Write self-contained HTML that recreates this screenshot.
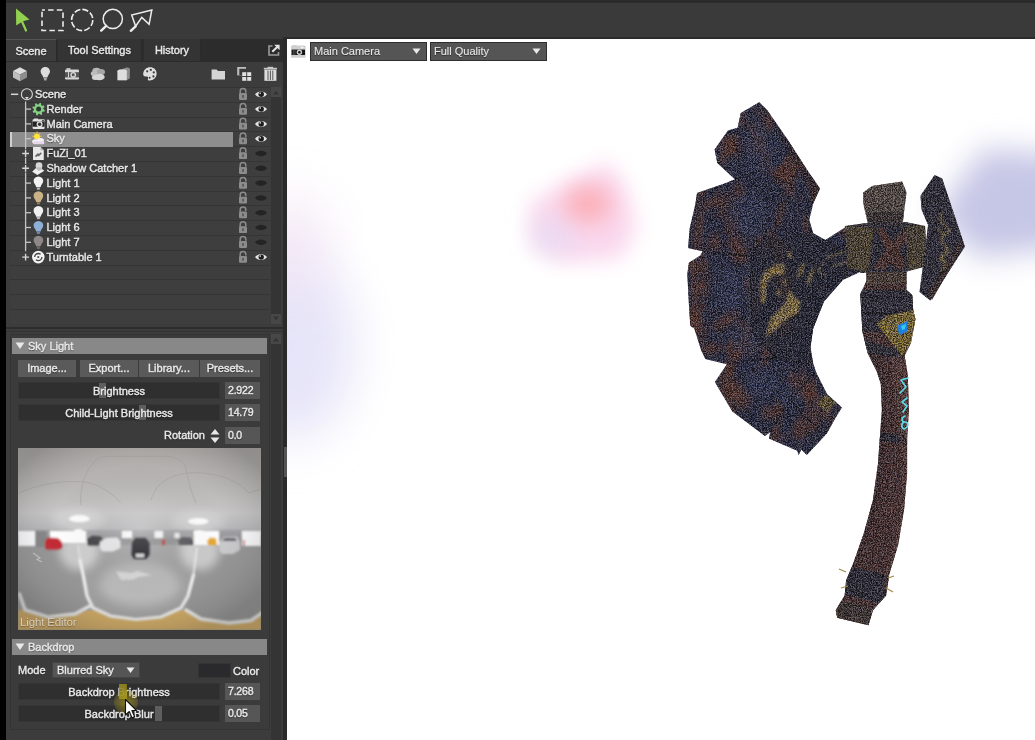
<!DOCTYPE html>
<html><head><meta charset="utf-8">
<style>
*{box-sizing:border-box;margin:0;padding:0}
html,body{width:1035px;height:740px;overflow:hidden;background:#3a3a3b}
body{position:relative;font-family:"Liberation Sans","DejaVu Sans",sans-serif;font-size:11px;-webkit-text-stroke:0.4px #e8e8e8;color:#e8e8e8;text-shadow:0 1px 1px rgba(0,0,0,.55)}
.abs{position:absolute}
#lstrip{left:0;top:0;width:6px;height:740px;background:#000}
#topline{left:6px;top:0;width:1029px;height:3px;background:#2b2b2c}
#topbar{left:6px;top:3px;width:1029px;height:37px;background:#3a3a3b}
#tabrow{left:6px;top:39px;width:279px;height:23px;background:#2c2c2d}
.tab{position:absolute;top:0;height:22px;line-height:22px;text-align:center;background:#343435;border-right:1px solid #2a2a2a}
#panel{left:6px;top:62px;width:279px;height:678px;background:#3c3c3d}
#pedge{left:283px;top:39px;width:4px;height:701px;background:#2a2a2b}
#view{left:287px;top:39px;width:748px;height:701px;background:#fff;overflow:hidden}
.row{position:absolute;left:0;width:260px;height:15px;border-bottom:1px solid #373738}
.row span{position:absolute;top:0;line-height:14px;white-space:nowrap}
.btn{position:absolute;top:360px;height:17px;background:#5a5a5b;text-align:center;line-height:17px}
.sl{position:absolute;left:18px;width:202px;height:17px;background:#2f2f30;text-align:center;line-height:17px;border:1px solid #353536}
.val{position:absolute;left:225px;width:35px;height:17px;background:#565657;line-height:17px;padding-left:3px;font-size:10.5px;letter-spacing:-0.2px}
.hd{position:absolute;left:12px;width:255px;height:16px;background:#888889;line-height:16px;padding-left:16px}
.hdl{position:absolute;width:7px;background:#5c5c5d}
.dd{position:absolute;top:42px;height:19px;background:#555556;border:1px solid #2e2e2e;line-height:17px;padding-left:3px;font-size:11px;-webkit-text-stroke:0.1px #e6e6e6}
.tl{line-height:14px;white-space:nowrap}
#wrap{position:absolute;left:0;top:0;width:1035px;height:740px;will-change:transform}
</style></head><body><div id="wrap">
<div id="lstrip" class="abs"></div>
<div id="topbar" class="abs"></div>
<div id="topline" class="abs"></div>
<div id="tabrow" class="abs">
 <div class="tab" style="left:0;width:51px;background:#3c3c3d;border-top:1px solid #555">Scene</div>
 <div class="tab" style="left:52px;width:84px">Tool Settings</div>
 <div class="tab" style="left:138px;width:57px">History</div>
</div>
<div id="panel" class="abs"></div>
<div id="pedge" class="abs"></div>
<div class="abs" style="left:283px;top:36.5px;width:752px;height:2.5px;background:#2b2b2c"></div>
<div id="view" class="abs"></div>
<!--ICONS-->
<!-- toolbar icons -->
<svg class="abs" style="left:6px;top:0" width="160" height="40" viewBox="6 0 160 40">
<path d="M16 8.5 L29.5 19.5 L22.8 21.2 L16.2 25.5Z" fill="#92d050"/>
<path d="M22 21.5 L26 30.5" stroke="#92d050" stroke-width="2.2" stroke-linecap="round"/>
<rect x="42" y="10" width="21" height="20.5" fill="none" stroke="#ececec" stroke-width="1.6" stroke-dasharray="5.5 3.2" stroke-dashoffset="2.6"/>
<circle cx="82.2" cy="20" r="10.6" fill="none" stroke="#ececec" stroke-width="1.6" stroke-dasharray="6.2 2.1"/>
<circle cx="112.8" cy="18.9" r="9.6" fill="none" stroke="#ececec" stroke-width="1.5"/>
<path d="M106.2 25.8 L101.2 30.6" stroke="#ececec" stroke-width="2.4" stroke-linecap="round"/>
<path d="M135.6 26.3 L131.7 15.1 L151.8 10 L149.1 24.3 L141.8 17.4Z" fill="none" stroke="#ececec" stroke-width="1.5" stroke-linejoin="miter"/>
<path d="M135.6 26.3 L130.8 30.8" stroke="#ececec" stroke-width="2.4" stroke-linecap="round"/>
</svg>
<!-- popout -->
<svg class="abs" style="left:268px;top:44px" width="13" height="12" viewBox="0 0 13 12"><path d="M4.5 2 H1 V11 H10.5 V8" fill="none" stroke="#9a9a9a" stroke-width="1.6"/><path d="M4.3 7.8 L10 2.2" stroke="#e4e4e4" stroke-width="2"/><path d="M6.2 0.8 H11.6 V6.2Z" fill="#e4e4e4"/></svg>
<!-- panel icon row -->
<svg class="abs" style="left:6px;top:64px" width="278" height="20" viewBox="6 64 278 20">
<g>
<path d="M13 71 L20 67.3 L27 71 L20 74.5Z" fill="#ddd"/><path d="M13 71 L20 74.5 V81.2 L13 77.5Z" fill="#bdbdbd"/><path d="M27 71 L20 74.5 V81.2 L27 77.5Z" fill="#8e8e8e"/>
<path d="M45.3 67 C48.4 67 50 69.3 50 71.6 C50 74 47.8 75.2 47.4 77.5 H43.2 C42.8 75.2 40.6 74 40.6 71.6 C40.6 69.3 42.2 67 45.3 67Z" fill="#dcdcdc"/><path d="M43.6 78 H47 L46.4 80.4 H44.2Z" fill="#a8a8a8"/>
<rect x="65" y="69.5" width="14" height="10" rx="1" fill="#d8d8d8"/><rect x="65" y="72.2" width="14" height="5.2" fill="#555"/><circle cx="73.2" cy="74.8" r="2.9" fill="#d8d8d8"/><circle cx="73.2" cy="74.8" r="1.5" fill="#555"/><rect x="66.5" y="68.2" width="4" height="1.6" fill="#d8d8d8"/><rect x="68" y="72.2" width="1" height="5.2" fill="#d8d8d8"/>
<ellipse cx="96.5" cy="70.8" rx="4.2" ry="3" fill="#b9b9b9"/><ellipse cx="101" cy="72" rx="4" ry="3" fill="#a6a6a6"/><ellipse cx="94" cy="73.6" rx="3.2" ry="2.6" fill="#bdbdbd"/><ellipse cx="99.5" cy="77" rx="5.2" ry="3.3" fill="#d6d6d6"/><ellipse cx="95.5" cy="77.6" rx="3.6" ry="2.5" fill="#d6d6d6"/>
<path d="M118.5 72.5 C117.6 70.5 119.5 69.5 121 69.5 L126.5 67.6 C129.6 67.2 130.8 69.5 129.8 71.2 V78.6 L126.5 80.2 H118.5Z" fill="#8f8f8f"/><path d="M117.4 72.8 C116.6 70.4 118.6 69.6 120.2 69.6 H124.6 C126.4 69.6 127.6 71 126.8 72.8 V80.2 H117.4Z" fill="#dedede"/>
<path d="M150 67.3 C154 67.3 156.6 70 156.6 73.6 C156.6 77.6 153.6 80.6 149.6 80.6 C148 80.6 147.4 79.6 148 78.4 C148.6 77 147.4 76.4 146 76.6 C144 76.8 143 75.6 143.2 73.6 C143.6 69.8 146.4 67.3 150 67.3Z" fill="#e0e0e0"/><circle cx="147.2" cy="71.3" r="1.1" fill="#3c3c3d"/><circle cx="150.8" cy="69.9" r="1.1" fill="#3c3c3d"/><circle cx="153.8" cy="72.4" r="1.1" fill="#3c3c3d"/><circle cx="153.4" cy="76.4" r="1.1" fill="#3c3c3d"/><circle cx="149.6" cy="77.8" r="1" fill="#3c3c3d"/>
<path d="M211.6 69.6 H216.6 L218 71 H225 V79.6 H211.6Z" fill="#d4d4d4"/>
<rect x="237.2" y="67" width="8.8" height="8.4" fill="#bdbdbd"/><rect x="239.3" y="68.8" width="6.7" height="6.6" fill="#3c3c3d"/><rect x="242.2" y="72.2" width="9" height="8.6" fill="#e2e2e2"/><path d="M246.7 72.2 V80.8 M242.2 76.5 H251.2" stroke="#3c3c3d" stroke-width="1"/>
<rect x="264.4" y="69.6" width="12" height="11.2" fill="#dcdcdc"/><path d="M268 70.6 V80 M270.4 70.6 V80 M272.8 70.6 V80" stroke="#555" stroke-width="1"/><rect x="263.8" y="67.8" width="13.2" height="1.6" fill="#c8c8c8"/><rect x="267.6" y="66.8" width="5.6" height="1.4" fill="#c8c8c8"/>
</g>
</svg>

<!--/ICONS-->
<!--TREE-->
<div class="abs" style="left:10px;top:87px;width:260px;height:237px;background:#3e3e3f;border-top:1px solid #343435;overflow:hidden" id="tree">
 <div class="abs" style="left:0;top:0;width:260px;height:237px;background:repeating-linear-gradient(#3e3e3f 0,#3e3e3f 13.8px,#353536 13.8px,#353536 14.8px)"></div>
 <div class="abs" style="left:0;top:44px;width:223px;height:14.5px;background:#8e8e8f"></div>
 <div class="abs" style="left:0;top:44px;width:2px;height:14.5px;background:#cfcfcf"></div>
 <!-- tree lines -->
 
 
</div>
<div class="abs" style="left:271px;top:87px;width:10px;height:237px;background:#343435"></div>
<div class="abs" style="left:271px;top:87px;width:10px;height:10px;background:#474748"></div>
<div class="abs" style="left:271px;top:314px;width:10px;height:10px;background:#474748"></div>
<svg class="abs" style="left:271px;top:87px" width="10" height="237"><path d="M2 7.5L5 3.5L8 7.5Z M2 229.5L5 233.5L8 229.5Z" fill="#343435"/></svg>
<svg class="abs" style="left:6px;top:84px" width="278" height="240" viewBox="6 84 278 240">
<path d="M25.6 101.5 V251.3" stroke="#c4c4c4" stroke-width="1.3"/>
<path d="M25.6 109.1 H31" stroke="#c4c4c4" stroke-width="1.3"/>
<path d="M25.6 123.9 H31" stroke="#c4c4c4" stroke-width="1.3"/>
<path d="M25.6 138.7 H31" stroke="#c4c4c4" stroke-width="1.3"/>
<path d="M25.6 183.1 H31" stroke="#c4c4c4" stroke-width="1.3"/>
<path d="M25.6 197.9 H31" stroke="#c4c4c4" stroke-width="1.3"/>
<path d="M25.6 212.7 H31" stroke="#c4c4c4" stroke-width="1.3"/>
<path d="M25.6 227.5 H31" stroke="#c4c4c4" stroke-width="1.3"/>
<path d="M25.6 242.3 H31" stroke="#c4c4c4" stroke-width="1.3"/>
<path d="M11 94.3 H18.2" stroke="#d6d6d6" stroke-width="1.5"/>
<rect x="21" y="149.3" width="9" height="8.4" fill="#3e3e3f"/>
<path d="M22.2 153.5 H29 M25.6 150.1 V156.9" stroke="#d6d6d6" stroke-width="1.4"/>
<rect x="21" y="164.1" width="9" height="8.4" fill="#3e3e3f"/>
<path d="M22.2 168.3 H29 M25.6 164.9 V171.7" stroke="#d6d6d6" stroke-width="1.4"/>
<rect x="21" y="252.9" width="9" height="8.4" fill="#3e3e3f"/>
<path d="M22.2 257.1 H29 M25.6 253.7 V260.5" stroke="#d6d6d6" stroke-width="1.4"/>
<circle cx="26.9" cy="94.3" r="5.5" fill="none" stroke="#d8d8d8" stroke-width="1.1"/><path d="M25 96.9 H28.8 L26.9 99.3Z" fill="#e8e8e8"/>
<path d="M44.88 110.35 L44.51 111.55 L42.51 111.71 L41.92 112.42 L42.16 114.42 L41.05 115.01 L39.52 113.71 L38.60 113.80 L37.35 115.38 L36.15 115.01 L35.99 113.01 L35.28 112.42 L33.28 112.66 L32.69 111.55 L33.99 110.02 L33.90 109.10 L32.32 107.85 L32.69 106.65 L34.69 106.49 L35.28 105.78 L35.04 103.78 L36.15 103.19 L37.68 104.49 L38.60 104.40 L39.85 102.82 L41.05 103.19 L41.21 105.19 L41.92 105.78 L43.92 105.54 L44.51 106.65 L43.21 108.18 L43.30 109.10Z" fill="#86d086"/><circle cx="38.6" cy="109.1" r="2.5" fill="#2f3a2f"/>
<rect x="32.6" y="119.3" width="12" height="9.6" rx=".8" fill="#e2e2e2"/><rect x="32.6" y="121.5" width="12" height="5.2" fill="#222"/><circle cx="39.6" cy="124.2" r="3" fill="#e2e2e2"/><circle cx="39.6" cy="124.2" r="1.7" fill="#333"/><rect x="34" y="118.5" width="4" height="1.4" fill="#e2e2e2"/><rect x="42" y="119.9" width="2" height="1.4" fill="#555"/>
<g stroke="#f6d23a" stroke-width="1"><path d="M37 131.5 V132.9 M32.4 136.3 H33.8 M33.6 132.9 L34.6 133.9 M40.4 132.9 L39.4 133.9 M41.6 136.3 H40.2"/></g><circle cx="37" cy="136.5" r="3" fill="#ffe23a"/>
<ellipse cx="40.6" cy="140.7" rx="3.4" ry="2.8" fill="#f4f0f6"/><ellipse cx="36" cy="141.7" rx="3.8" ry="2.4" fill="#f4f0f6"/><rect x="33" y="141.3" width="11.4" height="3" rx="1.5" fill="#e6d6ea"/>
<path d="M33 147.1 H40.6 L43.8 150.3 V160.1 H33Z" fill="#e8e8e8"/><path d="M40.6 147.1 V150.3 H43.8Z" fill="#aaa"/><path d="M36 156.1 L38 154.1 M38.6 155.5 L40.8 153.3" stroke="#666" stroke-width="1.7" stroke-linecap="round"/>
<circle cx="39" cy="165.7" r="3.4" fill="#d8d8d8"/><path d="M32.2 171.7 L36 167.9 L41.8 168.9 L44.4 170.7 L37.4 174.9Z" fill="#f0f0f0"/><path d="M35.6 168.5 C36.6 166.7 41.6 166.7 42.4 169.1 L39 171.1Z" fill="#bdbdbd"/>
<path d="M38.4 176.5 C41.6 176.5 43.2 178.7 43.2 181.1 C43.2 183.7 40.9 184.7 40.6 187.1 H36.2 C35.9 184.7 33.6 183.7 33.6 181.1 C33.6 178.7 35.2 176.5 38.4 176.5Z" fill="#f2f2f2"/><path d="M36.5 187.4 H40.3 L39.6 189.7 H37.2Z" fill="#b8b8b8"/>
<path d="M38.4 191.3 C41.6 191.3 43.2 193.5 43.2 195.9 C43.2 198.5 40.9 199.5 40.6 201.9 H36.2 C35.9 199.5 33.6 198.5 33.6 195.9 C33.6 193.5 35.2 191.3 38.4 191.3Z" fill="#c9b285"/><path d="M36.5 202.2 H40.3 L39.6 204.5 H37.2Z" fill="#8f7d5a"/>
<path d="M38.4 206.1 C41.6 206.1 43.2 208.3 43.2 210.7 C43.2 213.3 40.9 214.3 40.6 216.7 H36.2 C35.9 214.3 33.6 213.3 33.6 210.7 C33.6 208.3 35.2 206.1 38.4 206.1Z" fill="#f0f0f0"/><path d="M36.5 217.0 H40.3 L39.6 219.3 H37.2Z" fill="#b8b8b8"/>
<path d="M38.4 220.9 C41.6 220.9 43.2 223.1 43.2 225.5 C43.2 228.1 40.9 229.1 40.6 231.5 H36.2 C35.9 229.1 33.6 228.1 33.6 225.5 C33.6 223.1 35.2 220.9 38.4 220.9Z" fill="#8fb0d6"/><path d="M36.5 231.8 H40.3 L39.6 234.1 H37.2Z" fill="#6a88ac"/>
<path d="M38.4 235.7 C41.6 235.7 43.2 237.9 43.2 240.3 C43.2 242.9 40.9 243.9 40.6 246.3 H36.2 C35.9 243.9 33.6 242.9 33.6 240.3 C33.6 237.9 35.2 235.7 38.4 235.7Z" fill="#8e8888"/><path d="M36.5 246.6 H40.3 L39.6 248.9 H37.2Z" fill="#6c6868"/>
<circle cx="38.3" cy="257.1" r="6.3" fill="#f4f4f4"/><circle cx="38.3" cy="257.1" r="3.6" fill="none" stroke="#444" stroke-width="1.3" stroke-dasharray="8 3"/><circle cx="38.3" cy="257.1" r="1.1" fill="#555"/>
<path d="M240.2 93.7 V91.3 C240.2 87.7 245.8 87.7 245.8 91.3 V92.7" fill="none" stroke="#8c8c8c" stroke-width="1.5"/><rect x="239" y="93.1" width="8" height="6.8" rx="1.2" fill="#8c8c8c"/><rect x="242.3" y="95.1" width="1.4" height="2.8" fill="#4a4a4a"/>
<path d="M255 94.3 C257.4 90.4 264.6 90.4 267 94.3 C264.6 98.2 257.4 98.2 255 94.3Z" fill="#e6e6e6"/><circle cx="261.2" cy="94.3" r="2.7" fill="#1c1c1c"/><circle cx="260.2" cy="93.3" r=".8" fill="#eee"/>
<path d="M240.2 108.5 V106.1 C240.2 102.5 245.8 102.5 245.8 106.1 V107.5" fill="none" stroke="#8c8c8c" stroke-width="1.5"/><rect x="239" y="107.9" width="8" height="6.8" rx="1.2" fill="#8c8c8c"/><rect x="242.3" y="109.9" width="1.4" height="2.8" fill="#4a4a4a"/>
<path d="M255 109.1 C257.4 105.2 264.6 105.2 267 109.1 C264.6 113.0 257.4 113.0 255 109.1Z" fill="#e6e6e6"/><circle cx="261.2" cy="109.1" r="2.7" fill="#1c1c1c"/><circle cx="260.2" cy="108.1" r=".8" fill="#eee"/>
<path d="M240.2 123.3 V120.9 C240.2 117.3 245.8 117.3 245.8 120.9 V122.3" fill="none" stroke="#8c8c8c" stroke-width="1.5"/><rect x="239" y="122.7" width="8" height="6.8" rx="1.2" fill="#8c8c8c"/><rect x="242.3" y="124.7" width="1.4" height="2.8" fill="#4a4a4a"/>
<path d="M255 123.9 C257.4 120.0 264.6 120.0 267 123.9 C264.6 127.8 257.4 127.8 255 123.9Z" fill="#e6e6e6"/><circle cx="261.2" cy="123.9" r="2.7" fill="#1c1c1c"/><circle cx="260.2" cy="122.9" r=".8" fill="#eee"/>
<path d="M240.2 138.1 V135.7 C240.2 132.1 245.8 132.1 245.8 135.7 V137.1" fill="none" stroke="#8c8c8c" stroke-width="1.5"/><rect x="239" y="137.5" width="8" height="6.8" rx="1.2" fill="#8c8c8c"/><rect x="242.3" y="139.5" width="1.4" height="2.8" fill="#4a4a4a"/>
<path d="M255 138.7 C257.4 134.8 264.6 134.8 267 138.7 C264.6 142.6 257.4 142.6 255 138.7Z" fill="#e6e6e6"/><circle cx="261.2" cy="138.7" r="2.7" fill="#1c1c1c"/><circle cx="260.2" cy="137.7" r=".8" fill="#eee"/>
<path d="M240.2 152.9 V150.5 C240.2 146.9 245.8 146.9 245.8 150.5 V151.9" fill="none" stroke="#8c8c8c" stroke-width="1.5"/><rect x="239" y="152.3" width="8" height="6.8" rx="1.2" fill="#8c8c8c"/><rect x="242.3" y="154.3" width="1.4" height="2.8" fill="#4a4a4a"/>
<path d="M255 153.5 C257.4 149.8 264.6 149.8 267 153.5 C264.6 157.2 257.4 157.2 255 153.5Z" fill="#242425"/>
<path d="M240.2 167.7 V165.3 C240.2 161.7 245.8 161.7 245.8 165.3 V166.7" fill="none" stroke="#8c8c8c" stroke-width="1.5"/><rect x="239" y="167.1" width="8" height="6.8" rx="1.2" fill="#8c8c8c"/><rect x="242.3" y="169.1" width="1.4" height="2.8" fill="#4a4a4a"/>
<path d="M255 168.3 C257.4 164.6 264.6 164.6 267 168.3 C264.6 172.0 257.4 172.0 255 168.3Z" fill="#242425"/>
<path d="M240.2 182.5 V180.1 C240.2 176.5 245.8 176.5 245.8 180.1 V181.5" fill="none" stroke="#8c8c8c" stroke-width="1.5"/><rect x="239" y="181.9" width="8" height="6.8" rx="1.2" fill="#8c8c8c"/><rect x="242.3" y="183.9" width="1.4" height="2.8" fill="#4a4a4a"/>
<path d="M255 183.1 C257.4 179.4 264.6 179.4 267 183.1 C264.6 186.8 257.4 186.8 255 183.1Z" fill="#242425"/>
<path d="M240.2 197.3 V194.9 C240.2 191.3 245.8 191.3 245.8 194.9 V196.3" fill="none" stroke="#8c8c8c" stroke-width="1.5"/><rect x="239" y="196.7" width="8" height="6.8" rx="1.2" fill="#8c8c8c"/><rect x="242.3" y="198.7" width="1.4" height="2.8" fill="#4a4a4a"/>
<path d="M255 197.9 C257.4 194.2 264.6 194.2 267 197.9 C264.6 201.6 257.4 201.6 255 197.9Z" fill="#242425"/>
<path d="M240.2 212.1 V209.7 C240.2 206.1 245.8 206.1 245.8 209.7 V211.1" fill="none" stroke="#8c8c8c" stroke-width="1.5"/><rect x="239" y="211.5" width="8" height="6.8" rx="1.2" fill="#8c8c8c"/><rect x="242.3" y="213.5" width="1.4" height="2.8" fill="#4a4a4a"/>
<path d="M255 212.7 C257.4 209.0 264.6 209.0 267 212.7 C264.6 216.4 257.4 216.4 255 212.7Z" fill="#242425"/>
<path d="M240.2 226.9 V224.5 C240.2 220.9 245.8 220.9 245.8 224.5 V225.9" fill="none" stroke="#8c8c8c" stroke-width="1.5"/><rect x="239" y="226.3" width="8" height="6.8" rx="1.2" fill="#8c8c8c"/><rect x="242.3" y="228.3" width="1.4" height="2.8" fill="#4a4a4a"/>
<path d="M255 227.5 C257.4 223.8 264.6 223.8 267 227.5 C264.6 231.2 257.4 231.2 255 227.5Z" fill="#242425"/>
<path d="M240.2 241.7 V239.3 C240.2 235.7 245.8 235.7 245.8 239.3 V240.7" fill="none" stroke="#8c8c8c" stroke-width="1.5"/><rect x="239" y="241.1" width="8" height="6.8" rx="1.2" fill="#8c8c8c"/><rect x="242.3" y="243.1" width="1.4" height="2.8" fill="#4a4a4a"/>
<path d="M255 242.3 C257.4 238.6 264.6 238.6 267 242.3 C264.6 246.0 257.4 246.0 255 242.3Z" fill="#242425"/>
<path d="M240.2 256.5 V254.1 C240.2 250.5 245.8 250.5 245.8 254.1 V255.5" fill="none" stroke="#8c8c8c" stroke-width="1.5"/><rect x="239" y="255.9" width="8" height="6.8" rx="1.2" fill="#8c8c8c"/><rect x="242.3" y="257.9" width="1.4" height="2.8" fill="#4a4a4a"/>
<path d="M255 257.1 C257.4 253.2 264.6 253.2 267 257.1 C264.6 261.0 257.4 261.0 255 257.1Z" fill="#e6e6e6"/><circle cx="261.2" cy="257.1" r="2.7" fill="#1c1c1c"/><circle cx="260.2" cy="256.1" r=".8" fill="#eee"/>
</svg>
<span class="abs tl" style="left:35px;top:87.0px">Scene</span>
<span class="abs tl" style="left:46.5px;top:101.8px">Render</span>
<span class="abs tl" style="left:46.5px;top:116.6px">Main Camera</span>
<span class="abs tl" style="left:46.5px;top:131.4px">Sky</span>
<span class="abs tl" style="left:46.5px;top:146.2px">FuZi_01</span>
<span class="abs tl" style="left:46.5px;top:161.0px">Shadow Catcher 1</span>
<span class="abs tl" style="left:46.5px;top:175.8px">Light 1</span>
<span class="abs tl" style="left:46.5px;top:190.6px">Light 2</span>
<span class="abs tl" style="left:46.5px;top:205.4px">Light 3</span>
<span class="abs tl" style="left:46.5px;top:220.2px">Light 6</span>
<span class="abs tl" style="left:46.5px;top:235.0px">Light 7</span>
<span class="abs tl" style="left:46.5px;top:249.8px">Turntable 1</span>
<!--/TREE-->
<!--PROPS-->
<!-- divider -->
<div class="abs" style="left:6px;top:327px;width:277px;height:2px;background:#2d2d2e"></div>
<div class="abs" style="left:6px;top:331px;width:277px;height:1px;background:#333334"></div>
<div class="abs" style="left:10px;top:334px;width:260px;height:396px;background:#3b3b3c;border:1px solid #343435"></div>
<div class="abs" style="left:6px;top:730px;width:265px;height:10px;background:#3c3c3d"></div>
<!-- prop scrollbar -->
<div class="abs" style="left:271px;top:334px;width:10px;height:406px;background:#343435"></div>
<div class="abs" style="left:271px;top:334px;width:10px;height:10px;background:#474748"></div>
<svg class="abs" style="left:271px;top:334px" width="10" height="10"><path d="M2 7.5L5 3.5L8 7.5Z" fill="#343435"/></svg>
<div class="abs" style="left:284px;top:447px;width:3px;height:30px;background:#555556"></div>

<div class="hd" style="top:338px">Sky Light</div>
<svg class="abs" style="left:15px;top:342px" width="10" height="8"><path d="M0.5 0.5H9.5L5 7Z" fill="#e8e8e8"/></svg>
<div class="btn" style="left:18px;width:58px">Image...</div>
<div class="btn" style="left:80px;width:58px">Export...</div>
<div class="btn" style="left:139px;width:60px">Library...</div>
<div class="btn" style="left:200px;width:60px">Presets...</div>

<div class="sl" style="top:382px"><i style="position:absolute;left:80px;top:0;width:7px;height:15px;background:#5e5e5f"></i><span style="position:relative">Brightness</span></div>
<div class="val" style="top:382px">2.922</div>
<div class="sl" style="top:404px"><i style="position:absolute;left:119.5px;top:0;width:7px;height:15px;background:#5e5e5f"></i><span style="position:relative">Child-Light Brightness</span></div>
<div class="val" style="top:404px">14.79</div>
<span class="abs" style="left:140px;width:65px;text-align:right;top:427px;line-height:17px">Rotation</span>
<svg class="abs" style="left:209px;top:428px" width="12" height="16"><path d="M1.5 6.5L6 1L10.5 6.5Z M1.5 9.5L6 15L10.5 9.5Z" fill="#e8e8e8"/></svg>
<div class="val" style="top:427px">0.0</div>
<!--PANO-->
<svg class="abs" style="left:18px;top:448px" width="243" height="182" viewBox="18 448 243 182">
<defs>
<linearGradient id="pg1" x1="0" y1="0" x2="0" y2="1"><stop offset="0" stop-color="#adaaa7"/><stop offset=".2" stop-color="#b9b7b5"/><stop offset=".36" stop-color="#c6c5c5"/><stop offset=".46" stop-color="#b2b2b5"/><stop offset=".5" stop-color="#8a8a8c"/><stop offset=".56" stop-color="#969697"/><stop offset=".75" stop-color="#9c9c9c"/><stop offset=".9" stop-color="#989898"/><stop offset="1" stop-color="#949494"/></linearGradient>
<radialGradient id="pg2" cx=".5" cy=".45" r=".6"><stop offset="0" stop-color="#fff" stop-opacity=".25"/><stop offset=".6" stop-color="#888" stop-opacity="0"/><stop offset="1" stop-color="#444" stop-opacity=".28"/></radialGradient>
<filter id="pb1" x="-20%" y="-20%" width="140%" height="140%"><feGaussianBlur stdDeviation="0.9"/></filter>
<filter id="pb2" x="-30%" y="-30%" width="160%" height="160%"><feGaussianBlur stdDeviation="2.5"/></filter>
<filter id="pb3" x="-30%" y="-30%" width="160%" height="160%"><feGaussianBlur stdDeviation="5"/></filter>
<clipPath id="pcl"><rect x="18" y="448" width="243" height="182"/></clipPath>
</defs>
<g clip-path="url(#pcl)">
<rect x="18" y="448" width="243" height="182" fill="url(#pg1)"/>
<!-- yellow band -->
<rect x="18" y="610" width="243" height="20" fill="#d2aa60" filter="url(#pb1)"/>
<!-- floor U areas -->
<g filter="url(#pb1)">
<path d="M18 545 H78 L83 573 L87 596 L93 608 L75 614 L48 617 L25 611 L18 594Z" fill="#969696"/>
<path d="M79 545 H197 L193 576 L188 596 L181 608 L161 617 L136 619.5 L110 616 L93 608 L87 596 L83 573Z" fill="#a0a0a1"/>
<path d="M197 545 H261 V614 L251 620.5 L229 623 L201 619 L186 610 L190 596 L193.5 576Z" fill="#959595"/>
</g>
<!-- light glow on floor/horizon -->
<ellipse cx="79" cy="550" rx="20" ry="20" fill="#fff" opacity=".5" filter="url(#pb3)"/>
<ellipse cx="200" cy="550" rx="20" ry="20" fill="#fff" opacity=".5" filter="url(#pb3)"/>
<ellipse cx="140" cy="585" rx="40" ry="22" fill="#d0d0d0" opacity=".5" filter="url(#pb3)"/>
<!-- ceiling glow -->
<ellipse cx="79" cy="520" rx="26" ry="11" fill="#fff" opacity=".3" filter="url(#pb3)"/>
<ellipse cx="198" cy="522" rx="26" ry="11" fill="#fff" opacity=".3" filter="url(#pb3)"/>
<!-- horizon band: windows -->
<g filter="url(#pb1)">
<rect x="18" y="530" width="243" height="9" fill="#97979a" opacity=".7"/>
<rect x="18" y="531" width="17" height="15" fill="#fdfdff"/>
<rect x="35" y="531" width="11.5" height="16" fill="#858585"/>
<rect x="50" y="531" width="36" height="12" fill="#fff"/>
<rect x="122" y="531" width="10" height="7" fill="#fafafa"/>
<rect x="154.5" y="531" width="8.5" height="7" fill="#f4f4f4"/>
<rect x="174.5" y="533" width="5" height="5" fill="#eee"/>
<rect x="194" y="531" width="25" height="14" fill="#fff"/>
<rect x="242" y="531" width="19" height="15" fill="#fdfdff"/>
<!-- cars -->
<path d="M45 541 L48 537.5 L58 538 L62 542 V548 L58 549.5 H47 L45 548Z" fill="#c22a35"/>
<path d="M87 539 L92 535.5 L101 536 L103 540 V544 L98 545.5 H88Z" fill="#3c3c40"/>
<path d="M100 542 L106 538 L117 537.5 L120.5 541 V548 L113 551.5 H103 L100 549Z" fill="#e6e6e8"/>
<path d="M132 543 L135 537.5 L146 537.5 L149.5 543 V555 L146 559 H134 L131.5 555Z" fill="#1c1c20"/>
<rect x="136" y="554" width="8" height="3" fill="#ddd"/>
<rect x="162" y="539" width="3" height="6" fill="#b8413a"/>
<path d="M178 540 L182 537 L191 537.5 L193.5 541 V545 H179Z" fill="#55555a"/>
<path d="M207 541 L210 537.5 L216 538 L217 545 H208Z" fill="#e8a82c"/>
<path d="M219 542 L224 537 L237 536.5 L240 541 V550 L233 554 H222 L219 550Z" fill="#c9c9cc"/>
<path d="M222 541 L225 538 L235 538 L237 541Z" fill="#5a5a60"/>
<rect x="243.5" y="540" width="1.5" height="6" fill="#c44"/>
</g>
<!-- ceiling lights -->
<ellipse cx="79.5" cy="518.7" rx="10.5" ry="3.6" fill="#fff" filter="url(#pb1)"/>
<ellipse cx="78.5" cy="531.5" rx="4.5" ry="2.6" fill="#fff" filter="url(#pb1)"/>
<ellipse cx="198.3" cy="521.3" rx="10.3" ry="3.4" fill="#fff" filter="url(#pb1)"/>
<ellipse cx="199" cy="533" rx="4.5" ry="2.4" fill="#fff" filter="url(#pb1)"/>
<!-- ceiling seams -->
<g fill="none" stroke="#9f9c99" stroke-width=".6" opacity=".85">
<path d="M81 505 C80 490 82 478 93 463 C98 457 104 456.3 110.5 456.3 L166 456.3 C178 457 184 462 186 468 C188 478 190 490 196 503"/>
<path d="M151 500 C154 490 160 483 166 480 C176 474 186 472.7 196 472.7 C208 473 218 475 226 478 C236 482 244 487 249 493"/>
<path d="M18.8 493 C28 489 36 486.5 43 485 C52 483 62 481.5 70 481.5 L83 481.5 C92 483 100 486 105.5 490 C112 494 117 498 120.5 503"/>
<path d="M249 493 C254 491 258 490 261 489.5"/>
</g>
<!-- white lines -->
<g fill="none" stroke="#f1f1f1" stroke-linecap="round" filter="url(#pb1)">
<path d="M77.8 545 L80 560" stroke-width="1"/>
<path d="M80 560 L83 574 L87 596 L93 608 L110.5 616 L136 619.5 L161 617 L181 608 L188 596 L193.5 575" stroke-width="3.2"/>
<path d="M193.5 575 L197 548" stroke-width="1.6"/>
<path d="M19.5 594 L25 610 L48 617 L75 614 L90 606" stroke-width="3.4"/>
<path d="M186 610 L201 619 L229 623 L251 620.5 L262 613" stroke-width="3.4"/>
</g>
<!-- arrow -->
<path d="M116 571.5 L132 573 L137 571 L152 575 L139 577 L133 579.5 L121 580Z" fill="#dcdcdc" opacity=".85" filter="url(#pb1)"/>
<path d="M33 553 L40 558 L37 559.5 L42 562" stroke="#d5d5d5" stroke-width="1.2" fill="none" opacity=".7"/>
<rect x="18" y="448" width="243" height="182" fill="url(#pg2)"/>
<text x="20" y="626" font-family="Liberation Sans, sans-serif" font-size="11.5" fill="#f2f2f2" opacity=".6" letter-spacing="-.15">Light Editor</text>
</g>
</svg>

<!--/PANO-->
<div class="hd" style="top:639px">Backdrop</div>
<svg class="abs" style="left:15px;top:643px" width="10" height="8"><path d="M0.5 0.5H9.5L5 7Z" fill="#e8e8e8"/></svg>
<span class="abs" style="left:18px;top:662px;line-height:16px">Mode</span>
<div class="abs" style="left:52px;top:662px;width:88px;height:16px;background:#555556;border:1px solid #444;line-height:14px;padding-left:4px">Blurred Sky</div>
<svg class="abs" style="left:126px;top:667px" width="9" height="7"><path d="M0.5 0.5H8.5L4.5 6Z" fill="#e8e8e8"/></svg>
<div class="abs" style="left:198px;top:663px;width:33px;height:15px;background:#2a2a2c;border:1px solid #343435"></div>
<span class="abs" style="left:233px;top:663px;line-height:16px">Color</span>
<div class="sl" style="top:683px"><i style="position:absolute;left:100px;top:0;width:7px;height:15px;background:#8a7f1e"></i><span style="position:relative">Backdrop Brightness</span></div>
<div class="val" style="top:683px">7.268</div>
<div class="sl" style="top:705px"><i style="position:absolute;left:136px;top:0;width:7px;height:15px;background:#5e5e5f"></i><span style="position:relative">Backdrop Blur</span></div>
<div class="val" style="top:705px">0.05</div>
<!-- cursor highlight + handle -->
<div class="abs" style="left:119px;top:684px;width:8px;height:15px;background:#8a7f1e;opacity:.85"></div>
<div class="abs" style="left:114px;top:690px;width:24px;height:24px;border-radius:12px;background:radial-gradient(rgba(190,170,20,.55),rgba(190,170,20,.25) 60%,rgba(190,170,20,0) 100%)"></div>
<svg class="abs" style="left:124px;top:698px" width="14" height="22"><path d="M1.5 1.5V17L5.3 13.5L8 19.8L10.6 18.7L7.9 12.5H12.5Z" fill="#fff" stroke="#111" stroke-width="1.1" stroke-linejoin="round"/></svg>

<!--/PROPS-->
<!--AXE-->
<svg class="abs" style="left:287px;top:39px" width="748" height="701" viewBox="287 39 748 701">
<defs>
<filter id="bb1" x="-50%" y="-50%" width="200%" height="200%"><feGaussianBlur stdDeviation="11"/></filter>
<filter id="bb4" x="-50%" y="-50%" width="200%" height="200%"><feGaussianBlur stdDeviation="15"/></filter>
<filter id="bb2" x="-50%" y="-50%" width="200%" height="200%"><feGaussianBlur stdDeviation="24"/></filter>
<filter id="bb3" x="-50%" y="-50%" width="200%" height="200%"><feGaussianBlur stdDeviation="8"/></filter>
<filter id="ab" x="-10%" y="-10%" width="120%" height="120%"><feGaussianBlur stdDeviation="3.5"/></filter>
<filter id="ab2" x="-10%" y="-10%" width="120%" height="120%"><feGaussianBlur stdDeviation="1.2"/></filter>
<filter id="rustn" color-interpolation-filters="sRGB" x="0" y="0" width="100%" height="100%"><feTurbulence type="fractalNoise" baseFrequency="0.035 0.022" numOctaves="3" seed="7" result="n"/><feColorMatrix in="n" type="matrix" values="0 0 0 0 .44  0 0 0 0 .24  0 0 0 0 .16  4.5 0 0 0 -2.3"/><feComposite in2="SourceGraphic" operator="in"/></filter>
<filter id="grain" color-interpolation-filters="sRGB" x="0" y="0" width="100%" height="100%"><feTurbulence type="fractalNoise" baseFrequency="0.9" numOctaves="2" seed="3" result="n"/><feColorMatrix in="n" type="matrix" values="0 0 0 0 0  0 0 0 0 0  0 0 0 0 0  2.2 2.2 2.2 0 -2.7"/><feComposite in2="SourceGraphic" operator="in"/></filter>
<filter id="grain2" color-interpolation-filters="sRGB" x="0" y="0" width="100%" height="100%"><feTurbulence type="fractalNoise" baseFrequency="0.8" numOctaves="2" seed="11" result="n"/><feColorMatrix in="n" type="matrix" values="0 0 0 0 .85  0 0 0 0 .82  0 0 0 0 .95  2.2 2.2 2.2 0 -3.0"/><feComposite in2="SourceGraphic" operator="in"/></filter>
</defs>
<g>
<ellipse cx="292" cy="345" rx="62" ry="95" fill="#e6e4f8" filter="url(#bb2)"/>
<ellipse cx="292" cy="245" rx="36" ry="50" fill="#f3e4f4" filter="url(#bb2)" opacity=".8"/>
<path d="M607 162 L530 203 L532 244 L563 262 L622 258 L636 227 L624 184Z" fill="#f9d6ec" filter="url(#bb1)"/>
<ellipse cx="553" cy="236" rx="24" ry="20" fill="#e6dcf4" filter="url(#bb1)" opacity=".65"/>
<ellipse cx="588" cy="204" rx="24" ry="19" fill="#fcaab0" filter="url(#bb1)" opacity=".85"/>
<path d="M984 148 L1090 158 L1090 244 L978 258 L936 214Z" fill="#c6c6e6" filter="url(#bb4)"/>
</g>
<clipPath id="cb"><path d="M759.2 102.2 L767.3 110.3 L788.9 141.4 L807.8 171.0 L820.0 188.6 L813.2 203.5 L809.2 219.7 L813.2 233.2 L825.4 240.0 L845.0 227.5 L860.0 250.0 L859.0 272.4 L843.0 279.7 L824.0 301.4 L813.2 328.4 L810.5 347.3 L813.2 363.5 L816.2 372.4 L827.0 394.0 L841.9 407.6 L835.1 418.4 L827.0 433.2 L806.8 454.9 L801.4 449.5 L798.6 454.9 L797.3 450.8 L768.9 438.6 L770.3 431.9 L764.9 436.0 L732.4 411.6 L714.9 381.9 L727.0 364.3 L705.4 359.0 L701.4 350.8 L694.3 328.4 L690.3 325.7 L688.9 304.0 L687.3 274.0 L688.9 262.7 L700.3 255.4 L702.7 251.3 L688.1 248.1 L689.7 228.6 L695.4 204.3 L697.0 193.0 L725.4 183.2 L734.9 179.2 L717.3 163.0 L714.6 149.5 L728.0 130.5 L737.6 127.8 L740.8 113.0Z"/></clipPath>
<path d="M759.2 102.2 L767.3 110.3 L788.9 141.4 L807.8 171.0 L820.0 188.6 L813.2 203.5 L809.2 219.7 L813.2 233.2 L825.4 240.0 L845.0 227.5 L860.0 250.0 L859.0 272.4 L843.0 279.7 L824.0 301.4 L813.2 328.4 L810.5 347.3 L813.2 363.5 L816.2 372.4 L827.0 394.0 L841.9 407.6 L835.1 418.4 L827.0 433.2 L806.8 454.9 L801.4 449.5 L798.6 454.9 L797.3 450.8 L768.9 438.6 L770.3 431.9 L764.9 436.0 L732.4 411.6 L714.9 381.9 L727.0 364.3 L705.4 359.0 L701.4 350.8 L694.3 328.4 L690.3 325.7 L688.9 304.0 L687.3 274.0 L688.9 262.7 L700.3 255.4 L702.7 251.3 L688.1 248.1 L689.7 228.6 L695.4 204.3 L697.0 193.0 L725.4 183.2 L734.9 179.2 L717.3 163.0 L714.6 149.5 L728.0 130.5 L737.6 127.8 L740.8 113.0Z" fill="#2b2f48"/>
<g clip-path="url(#cb)">
<ellipse cx="727" cy="150" rx="5" ry="17" transform="rotate(25 727 150)" fill="#74402c" filter="url(#ab)" opacity=".7"/>
<ellipse cx="741" cy="119" rx="4" ry="9" transform="rotate(10 741 119)" fill="#74402c" filter="url(#ab)" opacity=".7"/>
<ellipse cx="712" cy="203" rx="15" ry="5" transform="rotate(-25 712 203)" fill="#74402c" filter="url(#ab)" opacity=".7"/>
<ellipse cx="698" cy="232" rx="5" ry="22" transform="rotate(5 698 232)" fill="#74402c" filter="url(#ab)" opacity=".7"/>
<ellipse cx="740" cy="256" rx="9" ry="8" transform="rotate(0 740 256)" fill="#74402c" filter="url(#ab)" opacity=".7"/>
<ellipse cx="701" cy="288" rx="8" ry="10" transform="rotate(0 701 288)" fill="#74402c" filter="url(#ab)" opacity=".7"/>
<ellipse cx="726" cy="320" rx="16" ry="6" transform="rotate(-35 726 320)" fill="#74402c" filter="url(#ab)" opacity=".7"/>
<ellipse cx="709" cy="349" rx="12" ry="6" transform="rotate(-10 709 349)" fill="#74402c" filter="url(#ab)" opacity=".7"/>
<ellipse cx="738" cy="396" rx="10" ry="15" transform="rotate(-35 738 396)" fill="#74402c" filter="url(#ab)" opacity=".7"/>
<ellipse cx="771" cy="413" rx="10" ry="7" transform="rotate(0 771 413)" fill="#74402c" filter="url(#ab)" opacity=".7"/>
<ellipse cx="801" cy="428" rx="8" ry="11" transform="rotate(20 801 428)" fill="#74402c" filter="url(#ab)" opacity=".7"/>
<ellipse cx="826" cy="410" rx="6" ry="8" transform="rotate(0 826 410)" fill="#74402c" filter="url(#ab)" opacity=".7"/>
<ellipse cx="694" cy="305" rx="3.5" ry="28" transform="rotate(0 694 305)" fill="#74402c" filter="url(#ab)" opacity=".7"/>
<ellipse cx="758" cy="140" rx="4" ry="22" transform="rotate(-30 758 140)" fill="#74402c" filter="url(#ab)" opacity=".7"/>
<ellipse cx="815" cy="196" rx="5" ry="9" transform="rotate(0 815 196)" fill="#74402c" filter="url(#ab)" opacity=".7"/>
<ellipse cx="756" cy="300" rx="4" ry="20" transform="rotate(10 756 300)" fill="#74402c" filter="url(#ab)" opacity=".7"/>
<ellipse cx="780" cy="215" rx="4" ry="16" transform="rotate(15 780 215)" fill="#74402c" filter="url(#ab)" opacity=".7"/>
<path d="M759.2 102.2 L767.3 110.3 L788.9 141.4 L807.8 171.0 L820.0 188.6 L813.2 203.5 L809.2 219.7 L813.2 233.2 L825.4 240.0 L845.0 227.5 L860.0 250.0 L859.0 272.4 L843.0 279.7 L824.0 301.4 L813.2 328.4 L810.5 347.3 L813.2 363.5 L816.2 372.4 L827.0 394.0 L841.9 407.6 L835.1 418.4 L827.0 433.2 L806.8 454.9 L801.4 449.5 L798.6 454.9 L797.3 450.8 L768.9 438.6 L770.3 431.9 L764.9 436.0 L732.4 411.6 L714.9 381.9 L727.0 364.3 L705.4 359.0 L701.4 350.8 L694.3 328.4 L690.3 325.7 L688.9 304.0 L687.3 274.0 L688.9 262.7 L700.3 255.4 L702.7 251.3 L688.1 248.1 L689.7 228.6 L695.4 204.3 L697.0 193.0 L725.4 183.2 L734.9 179.2 L717.3 163.0 L714.6 149.5 L728.0 130.5 L737.6 127.8 L740.8 113.0Z" fill="#000" filter="url(#rustn)" opacity=".8"/>
<ellipse cx="760" cy="150" rx="16" ry="26" fill="#3f4870" filter="url(#ab)" opacity=".5"/>
<ellipse cx="748" cy="215" rx="20" ry="22" fill="#3f4870" filter="url(#ab)" opacity=".5"/>
<ellipse cx="730" cy="290" rx="14" ry="24" fill="#3f4870" filter="url(#ab)" opacity=".5"/>
<ellipse cx="745" cy="340" rx="16" ry="14" fill="#3f4870" filter="url(#ab)" opacity=".5"/>
<ellipse cx="762" cy="385" rx="18" ry="14" fill="#3f4870" filter="url(#ab)" opacity=".5"/>
<ellipse cx="790" cy="395" rx="12" ry="12" fill="#3f4870" filter="url(#ab)" opacity=".5"/>
<path d="M750.0 256.0 L764.0 237.0 L813.0 233.0 L825.0 240.0 L858.0 250.0 L858.0 272.0 L843.0 279.7 L824.0 301.4 L813.2 328.4 L810.5 347.3 L812.0 365.0 L775.0 358.0 L751.0 331.0Z" fill="#262733" opacity=".75"/>
<g fill="none" stroke="#17171d" stroke-width="1.3" opacity=".85">
<path d="M735 179 L762 170 L787 184"/>
<path d="M807 165 L787 184 L775 208 L767 222 L764 237 L750 256 L703 252"/>
<path d="M750 256 L751 331 L775 358 L727 364"/>
<path d="M775 358 L812 365"/>
<path d="M770 432 L790 400 L816 372"/>
<path d="M790 400 L808 420 L827 433"/>
</g>
<g fill="none" stroke="#6a7090" stroke-width="1" opacity=".55"><path d="M741 114 L738.5 128 M806 166 L786 185 L774 209 L766 223 L763 237.5 M749 257 L750 331 M688.5 263.5 L700 256.5 M715 382.5 L727 365.5"/></g>
<path d="M760 102 L821 188.6 L814 200 L768 112Z" fill="#3a2624" opacity=".75" filter="url(#ab2)"/>
</g>
<g fill="#a88d50" filter="url(#ab2)">
<path d="M760.8 303 L759.9 282.4 L764.6 271 L777.8 263.5 L785.4 265.4 L783.5 275 L772.2 275 L766.5 284.3 L765.5 303Z"/>
<path d="M765.5 337.3 L770.3 318.4 L785.4 303.2 L789.2 288.1 L793 295.7 L800.5 301.3 L798.6 312.7 L787.3 318.4 L774 331.6Z"/>
<path d="M787.3 252.2 L790 250 L792 257.8 L789 258Z M796.8 278.6 L799 268 L805.3 261.6 L802 274Z M806.2 286.2 L809 274 L814.7 267.3 L811 281Z M782 282 L787 279 L786 287Z M776 292 L781 288 L779 297Z"/>
</g>
<g fill="none" stroke="#a88d50" stroke-width="1.5" filter="url(#ab2)" opacity=".9">
<path d="M824 276 L818.5 269 L824 262 M826 258 L838 254 M832 266 L846 262 L852 256 L849 250 L838 254"/>
</g>
<rect x="820" y="397" width="13" height="13" transform="rotate(40 826.5 403.5)" fill="#85743c" opacity=".9"/>
<clipPath id="ch"><path d="M866.5 272.0 L866.5 281.0 L860.3 294.0 L862.4 331.9 L867.8 353.5 L876.5 370.8 L880.8 383.8 L881.9 409.7 L880.3 431.9 L877.9 464.6 L872.9 500.3 L863.9 533.0 L853.5 562.8 L846.1 580.6 L844.6 595.5 L835.7 610.3 L837.2 617.8 L868.4 625.2 L872.9 610.3 L886.2 595.5 L889.2 574.6 L898.1 544.9 L904.1 509.2 L907.1 473.5 L907.1 437.8 L908.9 409.7 L907.8 375.1 L904.6 355.7 L911.0 342.7 L915.4 318.9 L913.2 310.3 L912.2 295.0 L906.5 290.0 L906.5 272.0Z"/></clipPath>
<path d="M866.5 272.0 L866.5 281.0 L860.3 294.0 L862.4 331.9 L867.8 353.5 L876.5 370.8 L880.8 383.8 L881.9 409.7 L880.3 431.9 L877.9 464.6 L872.9 500.3 L863.9 533.0 L853.5 562.8 L846.1 580.6 L844.6 595.5 L835.7 610.3 L837.2 617.8 L868.4 625.2 L872.9 610.3 L886.2 595.5 L889.2 574.6 L898.1 544.9 L904.1 509.2 L907.1 473.5 L907.1 437.8 L908.9 409.7 L907.8 375.1 L904.6 355.7 L911.0 342.7 L915.4 318.9 L913.2 310.3 L912.2 295.0 L906.5 290.0 L906.5 272.0Z" fill="#553632"/>
<g clip-path="url(#ch)">
<rect x="855" y="290" width="65" height="42" fill="#34323d"/>
<path d="M860 338 L905 352 L905 360 L862 352Z" fill="#34323d"/>
<rect x="860" y="296" width="60" height="2" fill="#1e1e24"/><rect x="860" y="312" width="60" height="2" fill="#1e1e24"/>
<path d="M878 432 L908 436 L908 444 L878 441Z" fill="#2a2a32"/>
<path d="M848 566 L890 576 L882 604 L844 594Z" fill="#2f2e38"/>
<path d="M838 600 L880 610 L870 626 L834 618Z" fill="#4a3c34"/>
<path d="M890 355 L910 355 L910 470 L906 520 L890 590 L882 590 L898 520 L902 470Z" fill="#7a5246" opacity=".5" filter="url(#ab2)"/>
<path d="M866 355 L876 355 L884 385 L884 440 L878 500 L860 560 L846 580 L858 530 L874 470 L878 410Z" fill="#2e2024" opacity=".5" filter="url(#ab2)"/>
<rect x="862" y="272" width="46" height="12" fill="#5c4a3a"/>
</g>
<path d="M863.2 192.4 L871.9 186.0 L902.2 181.6 L906.5 192.4 L903.2 218.4 L900.0 224.0 L868.0 224.0 L863.2 203.2Z" fill="#675a4e"/>
<path d="M866 212 L904 212 L903 222 L868 222Z" fill="#3c3230" opacity=".8"/>
<path d="M844.9 226.0 L874.0 222.0 L905.0 222.0 L925.0 226.0 L927.0 266.0 L905.0 272.0 L862.0 273.0 L846.0 268.0Z" fill="#3a3436"/>
<path d="M845 226 L874 228 L868 272 L848 268Z" fill="#5f5236"/>
<path d="M906 226 L925 226 L927 266 L908 270Z" fill="#5a4e34"/>
<path d="M874 226 L906 226 L908 270 L870 272Z" fill="#2f2e3a"/>
<path d="M876 228 L884 228 L906 262 L902 270 L894 268Z M904 228 L908 240 L884 270 L874 270 L876 262Z" fill="#5c3a32"/>
<path d="M934.6 175.1 L942.2 178.4 L964.9 246.5 L930.3 300.5 L919.5 291.9 L922.7 268.1 L928.1 224.9 L921.6 209.7 L920.5 195.7Z" fill="#34323e"/>
<path d="M932 300 L963.8 244.3 L960 240 L928 292Z" fill="#43302c"/>
<path d="M942 213 C936 221 945 225 950 231 C944 235 937 239 944 245 C951 249 948 255 941 257 C946 261 945 267 942 270 M938 228 L944 236 M946 250 L939 262" fill="none" stroke="#a8904a" stroke-width="1.8" filter="url(#ab2)"/>
<path d="M876.5 324.3 L886.2 315.7 L913.2 310.3 L915.4 318.9 L911.0 342.7 L902.4 355.7Z" fill="#9d8436"/>
<path d="M759.2 102.2 L767.3 110.3 L788.9 141.4 L807.8 171.0 L820.0 188.6 L813.2 203.5 L809.2 219.7 L813.2 233.2 L825.4 240.0 L845.0 227.5 L860.0 250.0 L859.0 272.4 L843.0 279.7 L824.0 301.4 L813.2 328.4 L810.5 347.3 L813.2 363.5 L816.2 372.4 L827.0 394.0 L841.9 407.6 L835.1 418.4 L827.0 433.2 L806.8 454.9 L801.4 449.5 L798.6 454.9 L797.3 450.8 L768.9 438.6 L770.3 431.9 L764.9 436.0 L732.4 411.6 L714.9 381.9 L727.0 364.3 L705.4 359.0 L701.4 350.8 L694.3 328.4 L690.3 325.7 L688.9 304.0 L687.3 274.0 L688.9 262.7 L700.3 255.4 L702.7 251.3 L688.1 248.1 L689.7 228.6 L695.4 204.3 L697.0 193.0 L725.4 183.2 L734.9 179.2 L717.3 163.0 L714.6 149.5 L728.0 130.5 L737.6 127.8 L740.8 113.0Z M866.5 272.0 L866.5 281.0 L860.3 294.0 L862.4 331.9 L867.8 353.5 L876.5 370.8 L880.8 383.8 L881.9 409.7 L880.3 431.9 L877.9 464.6 L872.9 500.3 L863.9 533.0 L853.5 562.8 L846.1 580.6 L844.6 595.5 L835.7 610.3 L837.2 617.8 L868.4 625.2 L872.9 610.3 L886.2 595.5 L889.2 574.6 L898.1 544.9 L904.1 509.2 L907.1 473.5 L907.1 437.8 L908.9 409.7 L907.8 375.1 L904.6 355.7 L911.0 342.7 L915.4 318.9 L913.2 310.3 L912.2 295.0 L906.5 290.0 L906.5 272.0Z M863.2 192.4 L871.9 186.0 L902.2 181.6 L906.5 192.4 L903.2 218.4 L900.0 224.0 L868.0 224.0 L863.2 203.2Z M844.9 226.0 L874.0 222.0 L905.0 222.0 L925.0 226.0 L927.0 266.0 L905.0 272.0 L862.0 273.0 L846.0 268.0Z M934.6 175.1 L942.2 178.4 L964.9 246.5 L930.3 300.5 L919.5 291.9 L922.7 268.1 L928.1 224.9 L921.6 209.7 L920.5 195.7Z" fill="#000" filter="url(#grain)" opacity=".7"/>
<path d="M759.2 102.2 L767.3 110.3 L788.9 141.4 L807.8 171.0 L820.0 188.6 L813.2 203.5 L809.2 219.7 L813.2 233.2 L825.4 240.0 L845.0 227.5 L860.0 250.0 L859.0 272.4 L843.0 279.7 L824.0 301.4 L813.2 328.4 L810.5 347.3 L813.2 363.5 L816.2 372.4 L827.0 394.0 L841.9 407.6 L835.1 418.4 L827.0 433.2 L806.8 454.9 L801.4 449.5 L798.6 454.9 L797.3 450.8 L768.9 438.6 L770.3 431.9 L764.9 436.0 L732.4 411.6 L714.9 381.9 L727.0 364.3 L705.4 359.0 L701.4 350.8 L694.3 328.4 L690.3 325.7 L688.9 304.0 L687.3 274.0 L688.9 262.7 L700.3 255.4 L702.7 251.3 L688.1 248.1 L689.7 228.6 L695.4 204.3 L697.0 193.0 L725.4 183.2 L734.9 179.2 L717.3 163.0 L714.6 149.5 L728.0 130.5 L737.6 127.8 L740.8 113.0Z M866.5 272.0 L866.5 281.0 L860.3 294.0 L862.4 331.9 L867.8 353.5 L876.5 370.8 L880.8 383.8 L881.9 409.7 L880.3 431.9 L877.9 464.6 L872.9 500.3 L863.9 533.0 L853.5 562.8 L846.1 580.6 L844.6 595.5 L835.7 610.3 L837.2 617.8 L868.4 625.2 L872.9 610.3 L886.2 595.5 L889.2 574.6 L898.1 544.9 L904.1 509.2 L907.1 473.5 L907.1 437.8 L908.9 409.7 L907.8 375.1 L904.6 355.7 L911.0 342.7 L915.4 318.9 L913.2 310.3 L912.2 295.0 L906.5 290.0 L906.5 272.0Z M863.2 192.4 L871.9 186.0 L902.2 181.6 L906.5 192.4 L903.2 218.4 L900.0 224.0 L868.0 224.0 L863.2 203.2Z M844.9 226.0 L874.0 222.0 L905.0 222.0 L925.0 226.0 L927.0 266.0 L905.0 272.0 L862.0 273.0 L846.0 268.0Z M934.6 175.1 L942.2 178.4 L964.9 246.5 L930.3 300.5 L919.5 291.9 L922.7 268.1 L928.1 224.9 L921.6 209.7 L920.5 195.7Z" fill="#fff" filter="url(#grain2)" opacity=".32"/>
<path d="M897.0 325.4 L907.8 321.0 L906.8 331.9 L899.2 335.1Z" fill="#1f7fe0"/>
<path d="M901 326 L906 324 L905 329 L902 330Z" fill="#35c8f0"/>
<g fill="none" stroke="#5fd6e6" stroke-width="1.7" stroke-linecap="round" stroke-linejoin="round">
<path d="M908 378 L901 380 L906 387 L900 393"/>
<path d="M907 398 L902 402 L907 406 L903 412"/>
<path d="M905 416 C901 418 901 422 905 422 C909 422 909 427 904 429 C900 427 902 422 905 422"/>
</g>
<path d="M846 572 L839 569 M848 586 L841 588 M886 588 L893 592 M888 578 L894 576" stroke="#a08a4a" stroke-width="1.2"/>
</svg>
<!--/AXE-->
<!--VIEWUI-->
<svg class="abs" style="left:291.4px;top:45px" width="14.6" height="12.8" viewBox="0 0 14.6 12.8"><rect x="0" y="0.6" width="14.6" height="12.2" rx="1.2" fill="#cfcfcf"/><rect x="1.6" y="0" width="4" height="1.4" fill="#cfcfcf"/><rect x="0.6" y="4.6" width="13.4" height="5.4" fill="#151515"/><circle cx="8.4" cy="7.3" r="2.7" fill="#cfcfcf"/><circle cx="8.4" cy="7.3" r="1.3" fill="#151515"/><path d="M2.4 4.6 V10 M4 4.6 V10" stroke="#666" stroke-width=".7"/><rect x="9.6" y="1.8" width="3" height="1.6" rx=".8" fill="#f4f4f4"/></svg>
<div class="dd" style="left:310px;width:117px">Main Camera</div>
<svg class="abs" style="left:412px;top:48px" width="9" height="7"><path d="M0.5 0.5H8.5L4.5 6Z" fill="#e8e8e8"/></svg>
<div class="dd" style="left:430px;width:117px">Full Quality</div>
<svg class="abs" style="left:532px;top:48px" width="9" height="7"><path d="M0.5 0.5H8.5L4.5 6Z" fill="#e8e8e8"/></svg>

<!--/VIEWUI-->
</div></body></html>
